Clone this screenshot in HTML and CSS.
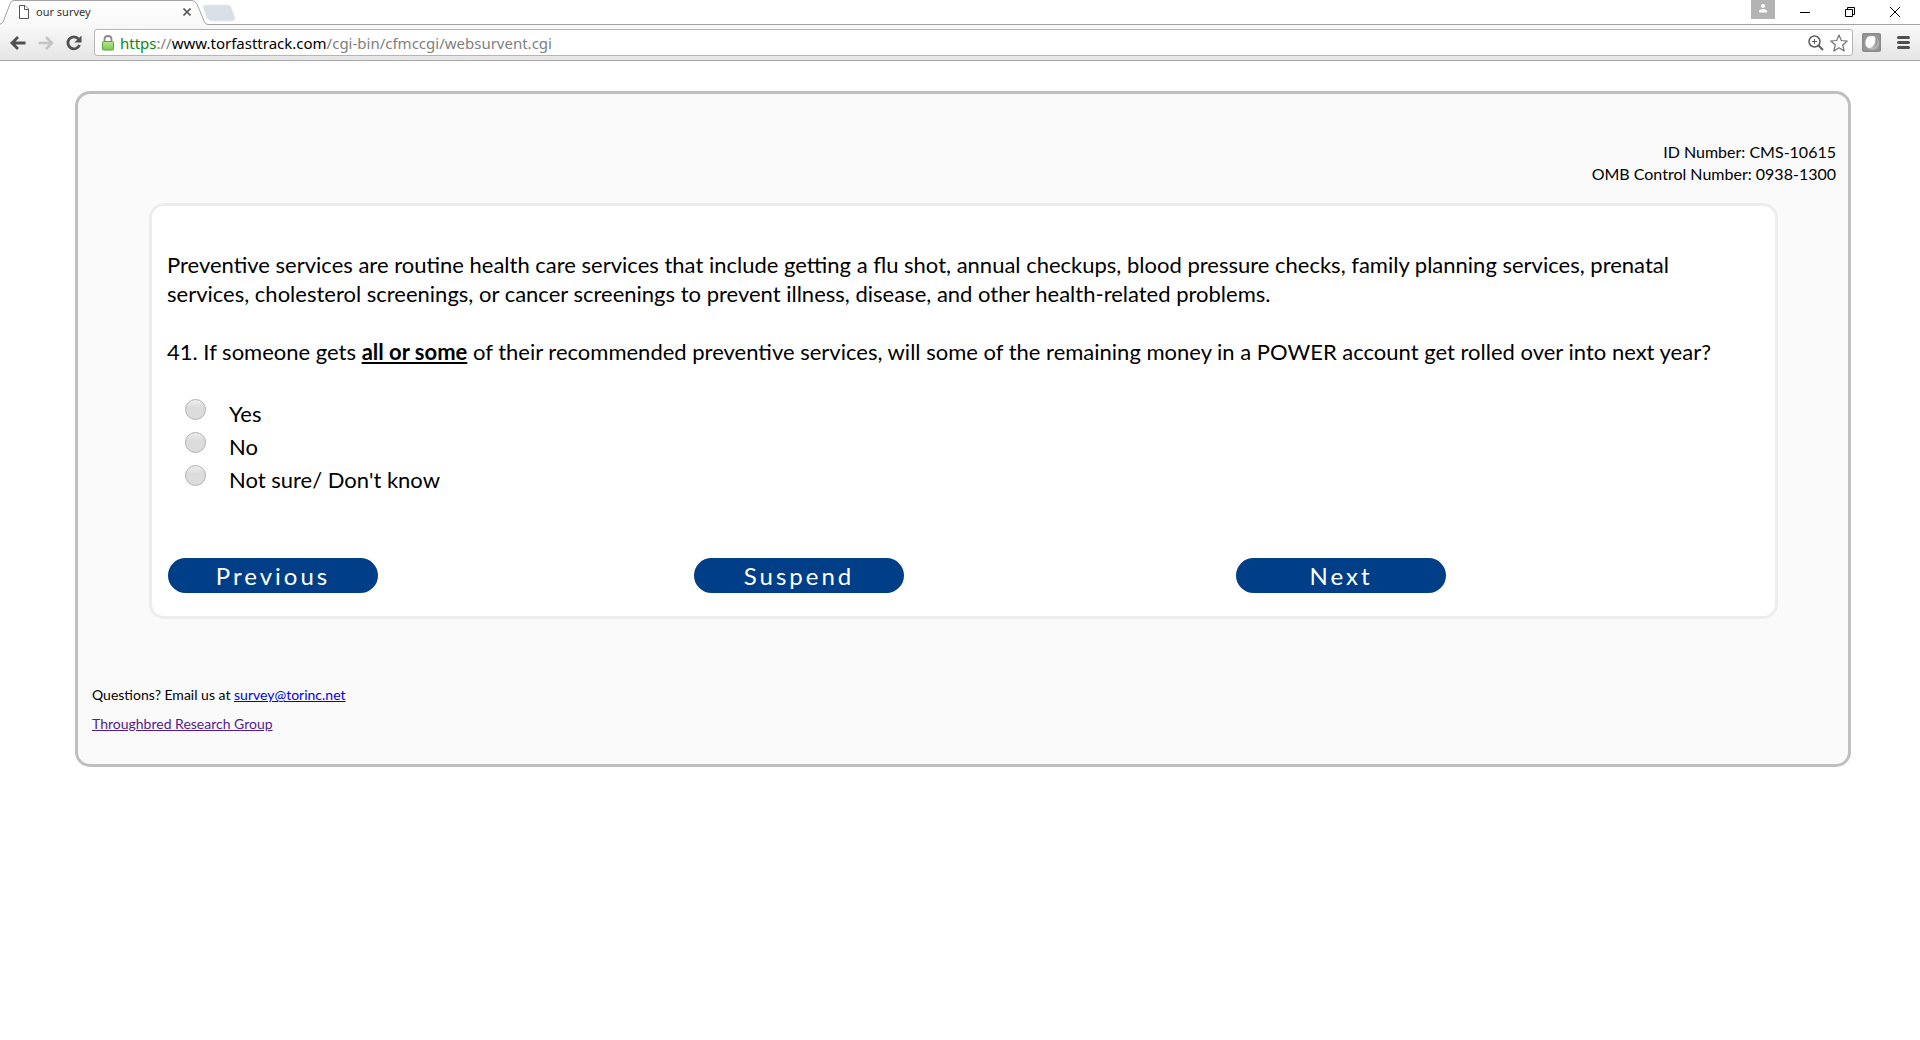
FILE: index.html
```html
<!DOCTYPE html>
<html lang="en">
<head>
<meta charset="utf-8">
<title>our survey</title>
<link rel="stylesheet" href="styles.css">
</head>
<body>
<header class="browser">
  <div class="tabstrip">
    <svg class="tab-shape" width="240" height="25" viewBox="0 0 240 25" aria-hidden="true">
      <defs><linearGradient id="tabfill" x1="0" y1="0" x2="0" y2="1"><stop offset="0" stop-color="#fff"/><stop offset="1" stop-color="#f8f8f8"/></linearGradient></defs>
      <path d="M203 7Q204 5 207 5H227Q230 5 231 7L235 18Q235 21 232 21H213Q209 21 207 18Z" fill="#d9dfe7" stroke="#e8ebee"/>
      <path d="M0 25V24Q2 24 3 22L10 4Q11 .5 14 .5H192Q195 .5 197 4L204 22Q205 24 208 24V25Z" fill="url(#tabfill)"/>
      <path d="M0 24Q2 24 3 22L10 4Q11 .5 14 .5H192Q195 .5 197 4L204 21Q205 24.500 208 24.500H240" fill="none" stroke="#a3a3a3"/>
    </svg>
    <div class="tab">
      <svg width="10" height="14" viewBox="0 0 10 14" fill="#fff" stroke="#555" aria-hidden="true"><path d="M.5 .5H6L9.500 4V13.500H.5Z"/><path d="M5.500 .5V4.500H9.500"/></svg>
      <span class="tab-title">our survey</span>
      <button class="plain" type="button" aria-label="Close tab"><svg width="8" height="8" viewBox="0 0 8 8" stroke="#5a5a5a" stroke-width="1.600"><path d="M.5 .5L7.500 7.500M7.500 .5L.5 7.500"/></svg></button>
    </div>
    <div class="window-controls">
      <button class="plain profile" type="button" aria-label="Profile"><svg width="8" height="9" viewBox="0 0 8 9" fill="#fff"><circle cx="4" cy="2" r="2"/><path d="M0 8.500V6.500Q2 5 4 5T8 6.500V8.500Z"/></svg></button>
      <button class="plain" type="button" aria-label="Minimize"><svg width="10" height="11" viewBox="0 0 10 11" stroke="#000"><path d="M0 5.500H10"/></svg></button>
      <button class="plain" type="button" aria-label="Restore"><svg width="10" height="10" viewBox="0 0 10 10" fill="none" stroke="#000"><path d="M.5 2.500H7.500V9.500H.5ZM2.500 2.500V.5H9.500V7.500H7.500"/></svg></button>
      <button class="plain" type="button" aria-label="Close"><svg width="10" height="10" viewBox="0 0 10 10" stroke="#000"><path d="M0 0L10 10M10 0L0 10"/></svg></button>
    </div>
  </div>
  <div class="toolbar">
    <button class="plain" type="button" aria-label="Back"><svg width="16" height="14" viewBox="0 0 16 14" fill="none" stroke="#505050" stroke-width="2.800"><path d="M15.500 7H2.500M8 1L2 7L8 13"/></svg></button>
    <button class="plain" type="button" aria-label="Forward"><svg width="16" height="14" viewBox="0 0 16 14" fill="none" stroke="#c4c4c4" stroke-width="2.600"><path d="M.5 7H13.500M8 1L14 7L8 13"/></svg></button>
    <button class="plain" type="button" aria-label="Reload"><svg width="16" height="16" viewBox="0 0 16 16"><path d="M12.500 4A6 6 0 1 0 13.500 10" fill="none" stroke="#505050" stroke-width="2.800"/><path d="M15.500 .5V7.500H8.500Z" fill="#505050"/></svg></button>
    <div class="omnibox">
      <svg width="12" height="16" viewBox="0 0 12 16" aria-hidden="true"><defs><linearGradient id="lock" x1="0" y1="0" x2="0" y2="1"><stop offset="0" stop-color="#b4e68c"/><stop offset="1" stop-color="#7ccd50"/></linearGradient></defs><path d="M2.500 7V4Q2.500 1 6 1T9.500 4V7" fill="none" stroke="#8b8b8b" stroke-width="1.800"/><rect x=".5" y="6.500" width="11" height="8.500" rx="1" fill="url(#lock)" stroke="#5da13c"/></svg>
      <div class="url" role="textbox" contenteditable="true" spellcheck="false" aria-label="Address"><span class="scheme">https</span>://<span class="host">www.torfasttrack.com</span>/cgi-bin/cfmccgi/websurvent.cgi</div>
      <button class="plain" type="button" aria-label="Zoom"><svg width="16" height="16" viewBox="0 0 16 16" fill="none" stroke="#5c5c5c"><circle cx="6.500" cy="6.500" r="5.500" stroke-width="1.500"/><path d="M4 6.500H9M6.500 4V9"/><path d="M10.500 10.500L15 15" stroke-width="2"/></svg></button>
      <button class="plain" type="button" aria-label="Bookmark"><svg width="18" height="18" viewBox="0 0 18 18" fill="#fff" stroke="#737373" stroke-width="1.200" stroke-linejoin="round"><path d="M9 1L11.300 6.500L17.200 7L12.700 11L14.200 17L9 13.800L3.800 17L5.300 11L.8 7L6.700 6.500Z"/></svg></button>
    </div>
    <button class="plain" type="button" aria-label="Extension"><svg width="19" height="19" viewBox="0 0 19 19"><rect width="19" height="19" rx="2" fill="#8a8a8a"/><rect x="1.500" y="1.500" width="16" height="16" rx="1" fill="#979797"/><circle cx="10" cy="10" r="7" fill="#b4b4b4"/><path d="M13 3Q18 9 12 15Q16 9 13 3Z" fill="#858585"/><path d="M3.500 10Q3.500 4 8 3Q12 2.500 13 4Q14 9 11 13Q8 16.500 5 14Q3.500 12.500 3.500 10Z" fill="#fff"/></svg></button>
    <button class="plain menu" type="button" aria-label="Menu"><svg width="13" height="13" viewBox="0 0 13 13" stroke="#505050" stroke-width="3" stroke-linecap="round"><path d="M1.500 1.500H11.500M1.500 6.500H11.500M1.500 11.500H11.500"/></svg></button>
  </div>
</header>

<main class="survey">
  <div class="form-ids">ID Number: CMS-10615<br>OMB Control Number: 0938-1300</div>
  <form class="card">
    <p>Preventive services are routine health care services that include getting a flu shot, annual checkups, blood pressure checks, family planning services, prenatal services, cholesterol screenings, or cancer screenings to prevent illness, disease, and other health-related problems.</p>
    <p id="question">41. If someone gets <strong>all or some</strong> of their recommended preventive services, will some of the remaining money in a POWER account get rolled over into next year?</p>
    <div class="answers" role="radiogroup" aria-labelledby="question">
      <div class="answer"><input type="radio" name="q41" id="yes"><label for="yes">Yes</label></div>
      <div class="answer"><input type="radio" name="q41" id="no"><label for="no">No</label></div>
      <div class="answer"><input type="radio" name="q41" id="unsure"><label for="unsure">Not sure/ Don't know</label></div>
    </div>
    <div class="actions">
      <button class="pill" type="button">Previous</button>
      <button class="pill" type="button">Suspend</button>
      <button class="pill" type="button">Next</button>
    </div>
  </form>
  <footer class="contact">
    <p>Questions? Email us at <a href="mailto:survey@torinc.net">survey@torinc.net</a></p>
    <p><a class="seen" href="#research-group">Throughbred Research Group</a></p>
  </footer>
</main>
</body>
</html>
```
FILE: styles.css
```css
* { box-sizing: border-box; }

body {
  margin: 0;
  background: #fff;
  color: #000;
  font-family: Lato, "Liberation Sans", sans-serif;
}

p { margin: 0; }

svg { display: block; flex: none; }

.plain {
  display: flex;
  flex: none;
  padding: 0;
  border: 0;
  background: none;
}

/* Browser frame */
.browser { font-family: "Noto Sans", sans-serif; }

.tabstrip {
  position: relative;
  display: flex;
  justify-content: space-between;
  height: 25px;
  border-bottom: 1px solid #a3a3a3;
}

.tab-shape {
  position: absolute;
  top: 0;
  left: 0;
}

.tab {
  position: relative;
  display: flex;
  align-items: center;
  width: 191px;
  padding-left: 19px;
}

.tab-title {
  flex: 1;
  padding-left: 7px;
  color: #333;
  font-size: 11px;
  line-height: 24px;
}

.window-controls {
  display: flex;
  align-items: center;
  gap: 35px;
  padding-right: 20px;
}

.profile {
  justify-content: center;
  align-self: flex-start;
  width: 24px;
  height: 19px;
  margin-right: -10px;
  padding-top: 4px;
  background: #b3b3b3;
}

.toolbar {
  display: flex;
  align-items: center;
  gap: 12px;
  height: 36px;
  padding: 0 10px;
  border-bottom: 1px solid #a9a9a9;
  background: linear-gradient(#f9f9f9, #e5e5e5);
}

.omnibox {
  display: flex;
  flex: 1;
  align-items: center;
  gap: 6px;
  height: 27px;
  margin-right: -3px;
  padding: 0 4px 0 7px;
  border: 1px solid #b5b5b5;
  border-radius: 3px;
  background: #fff;
}

.url {
  flex: 1;
  color: #808080;
  font-size: 15px;
  line-height: 24px;
  white-space: nowrap;
}

.scheme { color: #0b8a12; }
.host { color: #000; }
.menu { margin: 0 0 0 4px; }

/* Survey page */
.survey {
  margin: 30px 69px 0 75px;
  padding: 47px 12px 26px;
  border: 3px solid #bfbfbf;
  border-radius: 15px;
  background: #fafafa;
}

.form-ids {
  font-size: 16px;
  line-height: 22px;
  text-align: right;
}

.card {
  margin: 18px 58px 0 59px;
  padding: 44px 15px 23px;
  border: 3px solid #ededed;
  border-radius: 15px;
  background: #fff;
  font-size: 22px;
  line-height: 29px;
}

.card p { padding-right: 12px; }

.card p + p { margin-top: 29px; }

.card strong { text-decoration: underline; }

.answers { padding: 31px 0 0 18px; }

.answer {
  display: flex;
  gap: 23px;
  height: 33px;
}

.answer label { padding-top: 2px; }

.answer input {
  appearance: none;
  width: 21px;
  height: 21px;
  margin: 2px 0 0;
  border: 1px solid #b0b0b0;
  border-radius: 50%;
  background: linear-gradient(#ededed, #dcdcdc 40%, #dcdcdc);
}

.actions {
  display: grid;
  grid-template-columns: 526fr 542fr 524fr;
  margin-top: 62px;
  padding-left: 1px;
}

.pill {
  width: 210px;
  height: 35px;
  padding: 0;
  border: 0;
  border-radius: 18px;
  background: #003f87;
  color: #fff;
  font: 24px Lato, "Liberation Sans", sans-serif;
  letter-spacing: 3px;
}

.contact {
  margin-top: 61px;
  padding-left: 2px;
  font-size: 14px;
  line-height: 29px;
}

.contact a { color: #00e; }
.contact .seen { color: #551a8b; }
```
